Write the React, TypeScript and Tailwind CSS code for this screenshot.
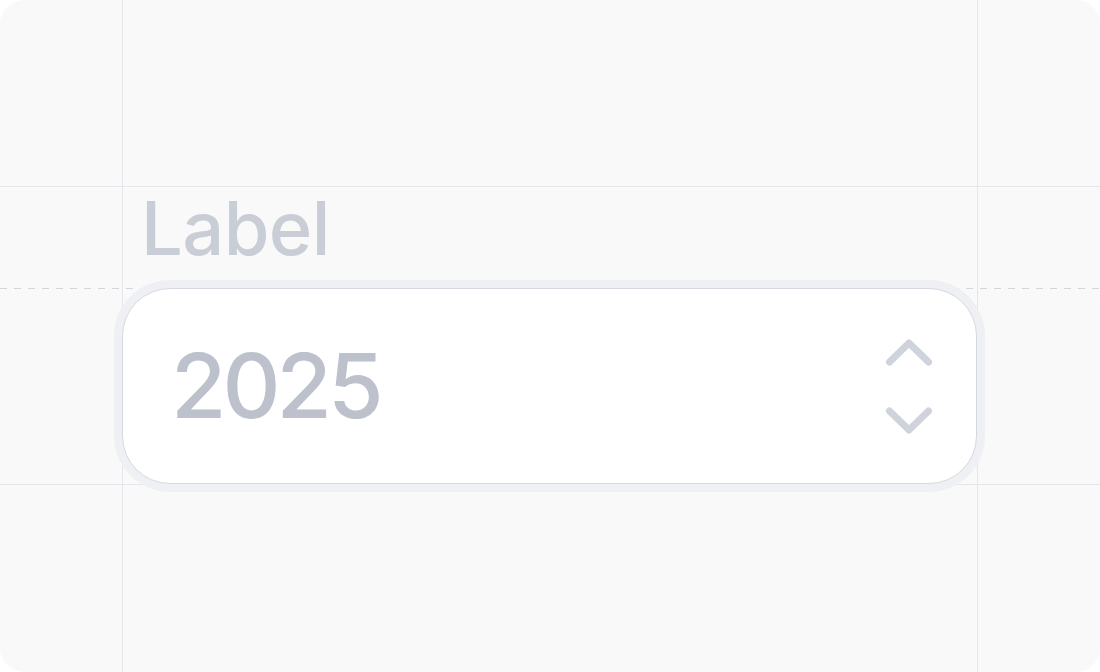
import React from 'react'

// Year stepper field shown over its layout guides
const App = () => {
  return (
    <div className="w-[1100px] h-[672px] bg-white" style={{ fontFamily: 'Inter, "Noto Sans", sans-serif' }}>
      <div className="relative w-full h-full overflow-hidden rounded-[24px] bg-[#f9f9fa]">
        {/* Guides */}
        <div className="absolute top-0 bottom-0 left-[122px] w-px bg-[#e4e6ec]" />
        <div className="absolute top-0 bottom-0 left-[977px] w-px bg-[#e4e6ec]" />
        <div className="absolute left-0 right-0 top-[186px] h-px bg-[#e4e6ec]" />
        <div className="absolute left-0 right-0 top-[484px] h-px bg-[#e4e6ec]" />
        <div className="absolute left-0 right-0 top-[288px] h-px bg-[repeating-linear-gradient(90deg,#d2d5de_0_7px,transparent_7px_14px)]" />

        {/* Field */}
        <div className="relative flex flex-col pl-[122px] pt-[191px] w-[977px]">
          <label className="pl-[19px] text-[74px] leading-none text-[#c9cdd6] font-medium tracking-[-0.6px]">Label</label>
          <div className="mt-[23px] flex h-[196px] items-center justify-between rounded-[48px] border border-[#d5d8df] bg-white pl-12 pr-[43px] shadow-[0_0_0_8px_#eff0f3]">
            <span className="text-[90px] leading-none text-[#bcc1cb] font-medium tracking-[-4px]">2025</span>
            <svg width="48" height="100" viewBox="0 0 48 100" fill="none" stroke="#cfd3db" strokeWidth="7" strokeLinecap="round" strokeLinejoin="round" className="-mt-[4px]">
              <path d="M4.5 28 L24 9 L43.5 28" />
              <path d="M4.5 77 L24 96 L43.5 77" />
            </svg>
          </div>
        </div>
      </div>
    </div>
  )
}

export default App
